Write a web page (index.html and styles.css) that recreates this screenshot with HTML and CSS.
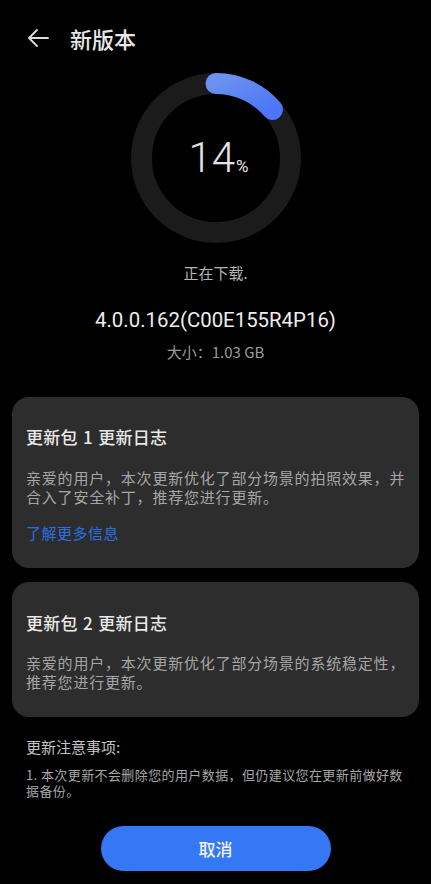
FILE: index.html
```html
<!DOCTYPE html>
<html lang="zh-CN">
<head>
<meta charset="utf-8">
<title>新版本</title>
<link rel="stylesheet" href="styles.css">
</head>
<body>
<div class="page">
  <header class="header">
    <svg class="back" width="22" height="20" viewBox="0 0 22 20">
      <path d="M21 10H2M10 2L2 10L10 18" fill="none" stroke="#dcdcdc" stroke-width="1.8" stroke-linecap="round" stroke-linejoin="round"/>
    </svg>
    <h1 class="title">新版本</h1>
  </header>

  <div class="ring">
    <svg class="ring-svg" width="170" height="170" viewBox="0 0 170 170">
      <defs>
        <linearGradient id="g" x1="0" y1="0" x2="1" y2="1">
          <stop offset="0" stop-color="#6a90f0"/>
          <stop offset="1" stop-color="#4c76f6"/>
        </linearGradient>
      </defs>
      <circle cx="85" cy="85" r="74.5" fill="none" stroke="#1b1b1b" stroke-width="21"/>
      <path d="M85 10.5A74.5 74.5 0 0 1 141.5 36.5" fill="none" stroke="url(#g)" stroke-width="21" stroke-linecap="round"/>
    </svg>
    <div class="percent"><span class="num">14</span><span class="pct">%</span></div>
  </div>

  <p class="status">正在下载.</p>
  <p class="version">4.0.0.162(C00E155R4P16)</p>
  <p class="size">大小：1.03 GB</p>

  <section class="card card-1">
    <h2 class="card-title">更新包 1 更新日志</h2>
    <p class="card-text">亲爱的用户，本次更新优化了部分场景的拍照效果，并合入了安全补丁，推荐您进行更新。</p>
    <a class="more">了解更多信息</a>
  </section>

  <section class="card card-2">
    <h2 class="card-title">更新包 2 更新日志</h2>
    <p class="card-text">亲爱的用户，本次更新优化了部分场景的系统稳定性，推荐您进行更新。</p>
  </section>

  <h3 class="notes-title">更新注意事项:</h3>
  <p class="notes-text">1. 本次更新不会删除您的用户数据，但仍建议您在更新前做好数据备份。</p>

  <div class="actions">
    <button class="cancel">取消</button>
  </div>
</div>
</body>
</html>
```
FILE: styles.css
```css
html, body {
  margin: 0;
  padding: 0;
  background: #000;
}
body {
  font-family: "Noto Sans", "Noto Sans CJK SC", sans-serif;
  color: #e6e6e6;
}
.page {
  width: 431px;
  height: 884px;
  overflow: hidden;
}
.header {
  display: flex;
  align-items: center;
  gap: 21px;
  height: 28px;
  padding: 24px 0 0 27px;
}
.back {
  display: block;
  flex: none;
}
.title {
  margin: 0;
  font-family: "Noto Sans CJK SC", sans-serif;
  font-size: 22px;
  font-weight: 500;
  color: #e8e8e8;
  line-height: 28px;
}
.ring {
  display: grid;
  place-items: center;
  width: 170px;
  height: 170px;
  margin: 21px auto 0;
}
.ring-svg, .percent {
  grid-area: 1 / 1;
}
.ring-svg { display: block; }
.percent {
  display: flex;
  align-items: baseline;
  color: #e4e4e4;
  padding-left: 6px;
}
.num {
  font-family: Roboto, "Noto Sans", sans-serif;
  font-weight: 300;
  font-size: 42px;
  line-height: 42px;
}
.pct {
  font-family: Roboto, "Noto Sans", sans-serif;
  font-size: 17px;
  margin-left: 1px;
}
.status {
  margin: 20px 0 0;
  text-align: center;
  font-family: "Noto Sans CJK SC", sans-serif;
  font-size: 15px;
  line-height: 20px;
  color: #b4b4b4;
}
.version {
  margin: 25px 0 0;
  text-align: center;
  font-family: Roboto, "Noto Sans", sans-serif;
  font-size: 20.4px;
  line-height: 24px;
  color: #ededed;
}
.size {
  margin: 10px 0 0;
  text-align: center;
  font-family: "Noto Sans CJK SC", sans-serif;
  font-size: 15px;
  line-height: 20px;
  color: #9a9a9a;
}
.card {
  margin: 35px 12px 0;
  background: #2d2d2d;
  border-radius: 17px;
  padding: 28px 13px 25px 14px;
}
.card-2 {
  margin-top: 14px;
  padding-top: 29px;
  padding-bottom: 26px;
}
.card-title {
  margin: 0;
  font-family: "Noto Sans CJK SC", sans-serif;
  font-size: 17px;
  font-weight: 500;
  letter-spacing: 0.3px;
  word-spacing: 1px;
  line-height: 24px;
  color: #e8e8e8;
}
.card-text {
  margin: 20px 0 0;
  font-family: "Noto Sans CJK SC", sans-serif;
  font-size: 15px;
  letter-spacing: 0.8px;
  line-height: 18.5px;
  color: #a6a6a6;
}
.card-2 .card-text {
  margin-top: 19px;
}
.more {
  display: block;
  margin-top: 17px;
  font-family: "Noto Sans CJK SC", sans-serif;
  font-size: 15px;
  letter-spacing: 0.5px;
  line-height: 20px;
  color: #2a6fe6;
}
.notes-title {
  margin: 20px 26px 0;
  font-family: "Noto Sans CJK SC", sans-serif;
  font-size: 15px;
  font-weight: 400;
  line-height: 20px;
  color: #c4c4c4;
}
.notes-text {
  margin: 10px 24px 0 26px;
  font-family: "Noto Sans CJK SC", sans-serif;
  font-size: 13px;
  letter-spacing: 0.4px;
  line-height: 15.5px;
  color: #a6a6a6;
}
.actions {
  display: flex;
  justify-content: center;
  margin-top: 28px;
}
.cancel {
  width: 230px;
  height: 45px;
  border: none;
  border-radius: 23px;
  background: #3478f6;
  color: #f2f2f2;
  font-family: "Noto Sans CJK SC", sans-serif;
  font-size: 17px;
  font-weight: 500;
}
```
